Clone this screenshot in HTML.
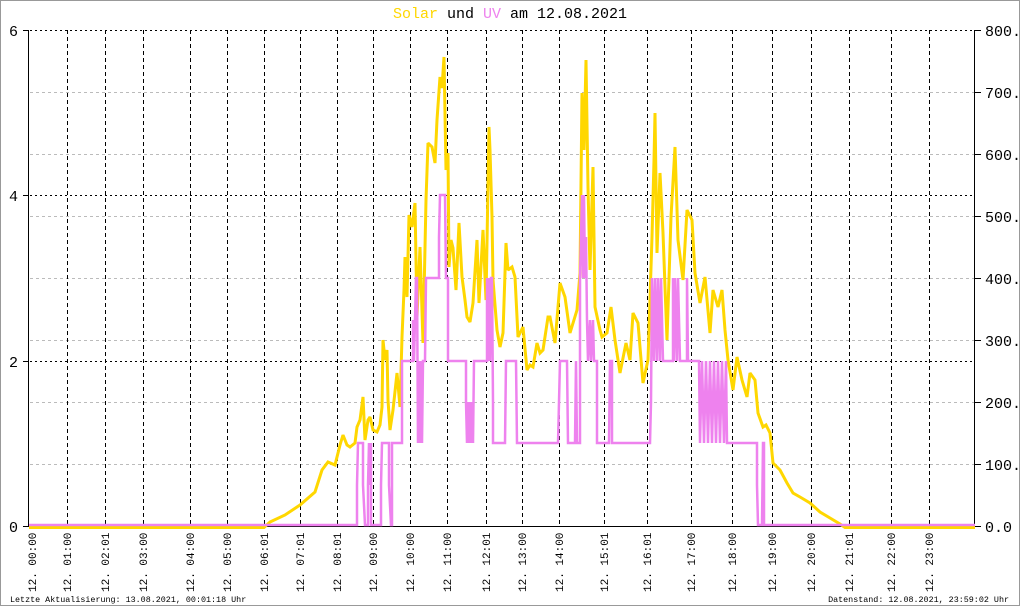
<!DOCTYPE html>
<html><head><meta charset="utf-8"><style>
html,body{margin:0;padding:0;background:#fff;}
svg{display:block;}
text{font-family:"Liberation Mono",monospace;}
</style></head><body>
<svg width="1020" height="606" viewBox="0 0 1020 606" xmlns="http://www.w3.org/2000/svg">
<rect x="0.5" y="0.5" width="1019" height="605" fill="#fff" stroke="#999" stroke-width="1"/>
<text x="510" y="18" font-size="15" text-anchor="middle"><tspan fill="#FFD700">Solar</tspan> und <tspan fill="#EE82EE">UV</tspan> am 12.08.2021</text>
<g stroke="#bbb" stroke-width="1" stroke-dasharray="3,3">
<line x1="30" x2="975" y1="92.5" y2="92.5"/><line x1="30" x2="975" y1="154.5" y2="154.5"/><line x1="30" x2="975" y1="216.5" y2="216.5"/><line x1="30" x2="975" y1="278.5" y2="278.5"/><line x1="30" x2="975" y1="340.5" y2="340.5"/><line x1="30" x2="975" y1="402.5" y2="402.5"/><line x1="30" x2="975" y1="464.5" y2="464.5"/>
</g>
<g stroke="#000" stroke-width="1" stroke-dasharray="2,3">
<line x1="30" x2="975" y1="30.5" y2="30.5"/><line x1="30" x2="975" y1="195.5" y2="195.5"/><line x1="30" x2="975" y1="361.5" y2="361.5"/>
</g>
<g stroke="#000" stroke-width="1" stroke-dasharray="4,3">
<line x1="67.5" x2="67.5" y1="30" y2="526"/><line x1="105.5" x2="105.5" y1="30" y2="526"/><line x1="143.5" x2="143.5" y1="30" y2="526"/><line x1="190.5" x2="190.5" y1="30" y2="526"/><line x1="227.5" x2="227.5" y1="30" y2="526"/><line x1="264.5" x2="264.5" y1="30" y2="526"/><line x1="300.5" x2="300.5" y1="30" y2="526"/><line x1="337.5" x2="337.5" y1="30" y2="526"/><line x1="373.5" x2="373.5" y1="30" y2="526"/><line x1="410.5" x2="410.5" y1="30" y2="526"/><line x1="447.5" x2="447.5" y1="30" y2="526"/><line x1="486.5" x2="486.5" y1="30" y2="526"/><line x1="522.5" x2="522.5" y1="30" y2="526"/><line x1="559.5" x2="559.5" y1="30" y2="526"/><line x1="604.5" x2="604.5" y1="30" y2="526"/><line x1="647.5" x2="647.5" y1="30" y2="526"/><line x1="691.5" x2="691.5" y1="30" y2="526"/><line x1="732.5" x2="732.5" y1="30" y2="526"/><line x1="772.5" x2="772.5" y1="30" y2="526"/><line x1="811.5" x2="811.5" y1="30" y2="526"/><line x1="849.5" x2="849.5" y1="30" y2="526"/><line x1="891.5" x2="891.5" y1="30" y2="526"/><line x1="929.5" x2="929.5" y1="30" y2="526"/>
</g>
<g stroke="#000" stroke-width="1">
<line x1="28.5" x2="28.5" y1="30" y2="527"/><line x1="974.5" x2="974.5" y1="30" y2="527"/><line x1="28" x2="975" y1="526.5" y2="526.5"/>
<line x1="23" x2="29" y1="30.5" y2="30.5"/><line x1="23" x2="29" y1="195.5" y2="195.5"/><line x1="23" x2="29" y1="361.5" y2="361.5"/><line x1="23" x2="29" y1="526.5" y2="526.5"/>
<line x1="975" x2="981" y1="30.5" y2="30.5"/><line x1="975" x2="981" y1="92.5" y2="92.5"/><line x1="975" x2="981" y1="154.5" y2="154.5"/><line x1="975" x2="981" y1="216.5" y2="216.5"/><line x1="975" x2="981" y1="278.5" y2="278.5"/><line x1="975" x2="981" y1="340.5" y2="340.5"/><line x1="975" x2="981" y1="402.5" y2="402.5"/><line x1="975" x2="981" y1="464.5" y2="464.5"/><line x1="975" x2="981" y1="526.5" y2="526.5"/>
</g>
<g font-size="15" fill="#000">
<text x="9" y="36">6</text><text x="9" y="201">4</text><text x="9" y="367">2</text><text x="9" y="532">0</text>
<text x="985" y="36">800.0</text><text x="985" y="98">700.0</text><text x="985" y="160">600.0</text><text x="985" y="222">500.0</text><text x="985" y="284">400.0</text><text x="985" y="346">300.0</text><text x="985" y="408">200.0</text><text x="985" y="470">100.0</text><text x="985" y="532">0.0</text>
</g>
<!-- Solar -->
<polyline fill="none" stroke="#FFD700" stroke-width="3" stroke-linejoin="miter" stroke-miterlimit="2" points="29,527.5 264,527.5 270,522 285,515 300,505 315,492 322,470 328,462 335,465 340,445 343,435 347,445 350,447 355,443 357,427 360,420 363,397 365,440 368,420 370,417 373,430 377,432 380,425 382,407 383,340 385,360 387,350 388,400 390,430 393,410 397,373 400,407 402,337 404,290 405,257 407,297 409,215 412,227 415,203 417,317 420,247 423,343 426,200 428,143 432,147 435,163 437,120 440,77 442,88 444,57 446,170 448,153 449,267 451,240 453,248 456,290 459,223 462,277 465,300 467,317 470,322 473,303 477,240 479,303 483,230 486,300 489,127 490,150 492,217 493,280 497,330 500,347 503,333 506,243 508,270 512,267 515,277 518,337 523,327 527,370 530,365 533,367 537,343 540,353 543,350 548,317 550,317 555,343 560,283 565,297 570,333 577,310 580,273 582,93 584,150 586,60 588,187 590,270 593,167 595,307 600,330 602,337 607,333 611,307 615,340 620,373 626,343 630,360 633,313 638,323 643,383 648,360 652,237 654,160 655,113 657,253 660,173 663,233 667,340 671,217 675,147 678,240 683,280 687,210 692,220 695,273 700,303 705,277 710,333 713,290 718,307 722,290 725,330 728,360 733,390 737,357 742,380 747,397 750,373 755,380 758,413 763,427 766,425 770,433 773,463 780,470 787,483 793,493 800,497 810,503 820,512 830,518 840,524 845,527.5 975,527.5"/>
<!-- UV -->
<polyline fill="none" stroke="#EE82EE" stroke-width="2.5" stroke-linejoin="miter" points="29,525 357,525 357,485 358,443 363,443 363,485 365,525 368,525 368,485 369,443 370,485 371,443 371,525 381,525 381,485 382,443 389,443 389,485 391,525 392,525 392,443 402,443 402,361 413,361 413,320 414,361 415,320 416,278 417,278 418,443 419,361 420,443 421,361 422,443 423,361 425,361 426,278 439,278 439,237 440,195 445,195 446,278 448,278 448,361 466,361 466,402 467,443 468,402 469,443 470,402 471,443 472,402 473,443 474,361 487,361 487,278 488,361 489,278 490,361 491,278 492,278 493,402 493,443 505,443 506,361 516,361 517,443 558,443 559,402 560,361 567,361 568,443 575,443 576,361 577,443 580,443 580,278 582,195 583,278 584,195 585,278 586,237 587,320 588,361 590,320 591,361 593,320 594,361 597,361 597,443 609,443 610,361 612,361 612,443 650,443 651,402 652,278 654,361 655,278 657,361 658,278 660,361 661,278 663,361 673,361 673,278 674,361 675,278 677,361 678,278 680,361 687,361 687,278 688,361 699,361 700,443 702,361 704,443 706,361 708,443 710,361 712,443 714,361 716,443 718,361 720,443 722,361 724,443 726,361 727,443 757,443 757,485 758,525 762,525 763,443 764,443 764,525 975,525"/>
<g font-size="11" fill="#000">
<text transform="translate(36,592) rotate(-90)">12. 00:00</text>
<text transform="translate(71,592) rotate(-90)">12. 01:00</text>
<text transform="translate(109,592) rotate(-90)">12. 02:01</text>
<text transform="translate(147,592) rotate(-90)">12. 03:00</text>
<text transform="translate(194,592) rotate(-90)">12. 04:00</text>
<text transform="translate(231,592) rotate(-90)">12. 05:00</text>
<text transform="translate(268,592) rotate(-90)">12. 06:01</text>
<text transform="translate(304,592) rotate(-90)">12. 07:01</text>
<text transform="translate(341,592) rotate(-90)">12. 08:01</text>
<text transform="translate(377,592) rotate(-90)">12. 09:00</text>
<text transform="translate(414,592) rotate(-90)">12. 10:00</text>
<text transform="translate(451,592) rotate(-90)">12. 11:00</text>
<text transform="translate(490,592) rotate(-90)">12. 12:01</text>
<text transform="translate(526,592) rotate(-90)">12. 13:00</text>
<text transform="translate(563,592) rotate(-90)">12. 14:00</text>
<text transform="translate(608,592) rotate(-90)">12. 15:01</text>
<text transform="translate(651,592) rotate(-90)">12. 16:01</text>
<text transform="translate(695,592) rotate(-90)">12. 17:00</text>
<text transform="translate(736,592) rotate(-90)">12. 18:00</text>
<text transform="translate(776,592) rotate(-90)">12. 19:00</text>
<text transform="translate(815,592) rotate(-90)">12. 20:00</text>
<text transform="translate(853,592) rotate(-90)">12. 21:01</text>
<text transform="translate(895,592) rotate(-90)">12. 22:00</text>
<text transform="translate(933,592) rotate(-90)">12. 23:00</text>
</g>
<text x="10" y="602" font-size="8.4" fill="#000">Letzte Aktualisierung: 13.08.2021, 00:01:18 Uhr</text>
<text x="1009" y="602" font-size="8.4" fill="#000" text-anchor="end">Datenstand: 12.08.2021, 23:59:02 Uhr</text>
</svg>
</body></html>
